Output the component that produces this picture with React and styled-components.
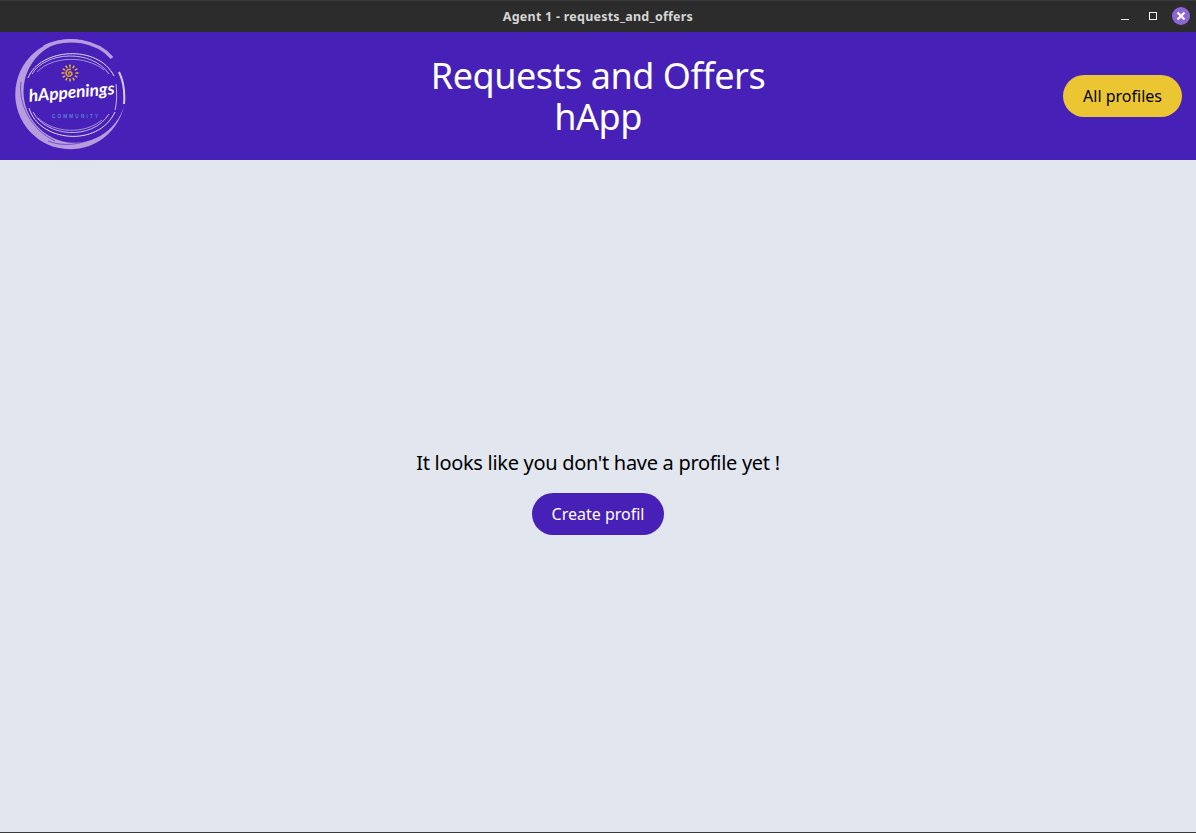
import React from "react";
import styled, { createGlobalStyle } from "styled-components";

const GlobalStyle = createGlobalStyle`
  html, body {
    margin: 0;
    padding: 0;
    height: 100%;
    background: #e2e6ef;
  }
  #root {
    height: 100%;
  }
`;

function WindowButtons() {
  return (
    <WindowControls>
      <svg width="12" height="12" viewBox="0 0 12 12">
        <rect x="2" y="9" width="8" height="1" fill="#e8e8e8" />
      </svg>
      <svg width="12" height="12" viewBox="0 0 12 12">
        <rect x="2.5" y="2.5" width="7" height="7" fill="none" stroke="#f0f0f0" />
      </svg>
      <CloseButton>
        <svg width="10" height="10" viewBox="0 0 10 10">
          <path d="M1.5 1.5L8.5 8.5M8.5 1.5L1.5 8.5" stroke="#fff" strokeWidth="2.2" />
        </svg>
      </CloseButton>
    </WindowControls>
  );
}

function Logo() {
  const rays = [0, 30, 60, 90, 120, 150, 180, 210, 240, 270, 300, 330];
  return (
    <svg width="112" height="114" viewBox="0 0 112 114">
      {/* brush ring */}
      <path d="M70 3A55 55 0 1 0 110 68A51.3 51.3 0 1 1 70 3Z" fill="#b79ce0" />
      <path d="M30 9C54 -3 84 3 98 20" fill="none" stroke="#b79ce0" strokeWidth="3.5" />
      <path d="M105 34C110 44 111 54 110 66" fill="none" stroke="#d9c9f2" strokeWidth="2" />
      <path d="M7 44C4 66 17 92 41 103" fill="none" stroke="#4720b7" strokeWidth="0.6" />
      <path d="M34 103C56 112 88 103 102 80" fill="none" stroke="#4720b7" strokeWidth="0.6" />
      {/* thin inner rings */}
      <g fill="none" stroke="#e4daf5">
        <path d="M14 40C26 10 84 6 100 38" strokeWidth="1" />
        <path d="M18 36C32 13 78 11 95 36" strokeWidth="0.8" />
        <path d="M23 34C38 18 72 17 90 32" strokeWidth="0.6" />
        <path d="M15 70C25 104 84 110 101 74" strokeWidth="1" />
        <path d="M19 74C32 99 78 103 95 76" strokeWidth="0.8" />
        <path d="M24 80C40 95 70 97 88 82" strokeWidth="0.6" />
        <path d="M102 46C103 56 103 64 101 72" strokeWidth="0.8" />
      </g>
      {/* sun */}
      <g stroke="#eec22f" strokeWidth="1.4">
        {rays.map((angle) => (
          <line key={angle} x1="56" y1="26.5" x2="56" y2="29.5" transform={`rotate(${angle} 56 35)`} />
        ))}
      </g>
      <path d="M55 36.5C54 34 56 33 57.5 34.5C59 37 55.5 39.5 53 37.5C50.5 34.5 53.5 30.5 57 31.5" fill="none" stroke="#e8a32a" strokeWidth="1.5" />
      <LogoName x="15" y="60" textLength="86" lengthAdjust="spacingAndGlyphs" transform="rotate(-5 58 59)">
        hAppenings
      </LogoName>
      <LogoTag x="38" y="80" textLength="46">COMMUNITY</LogoTag>
    </svg>
  );
}

export default function App() {
  return (
    <Page>
      <GlobalStyle />
      <TitleBar>
        <WindowTitle>Agent 1 - requests_and_offers</WindowTitle>
        <WindowButtons />
      </TitleBar>
      <Header>
        <LogoSlot>
          <Logo />
        </LogoSlot>
        <Title>
          Requests and Offers
          <br />
          hApp
        </Title>
        <HeaderActions>
          <PillButton $variant="yellow">All profiles</PillButton>
        </HeaderActions>
      </Header>
      <Main>
        <Message>It looks like you don't have a profile yet !</Message>
        <PillButton $variant="purple">Create profil</PillButton>
      </Main>
    </Page>
  );
}

const Page = styled.div`
  display: flex;
  flex-direction: column;
  height: 100vh;
  box-sizing: border-box;
  border-bottom: 1px solid #3a3a3a;
  overflow: hidden;
  font-family: "Noto Sans", "Open Sans", sans-serif;
  color: #000;
`;

const TitleBar = styled.div`
  position: relative;
  display: flex;
  align-items: center;
  justify-content: center;
  flex: 0 0 32px;
  background: #2c2c2c;
  border-top: 1px solid #3a3a3a;
  box-sizing: border-box;
`;

const WindowTitle = styled.span`
  font-size: 12.5px;
  font-weight: 700;
  color: #d6d6d6;
  letter-spacing: 0.24px;
`;

const WindowControls = styled.div`
  position: absolute;
  right: 6px;
  top: 6px;
  display: flex;
  align-items: center;
  gap: 16px;
`;

const CloseButton = styled.span`
  display: flex;
  align-items: center;
  justify-content: center;
  width: 18px;
  height: 18px;
  margin-left: -3px;
  border-radius: 50%;
  background: #8a66d6;
`;

const Header = styled.header`
  display: grid;
  grid-template-columns: 1fr auto 1fr;
  align-items: center;
  flex: 0 0 128px;
  padding: 0 14px;
  box-sizing: border-box;
  background: #4720b7;
`;

const LogoSlot = styled.div`
  display: flex;
  align-items: center;
  margin-bottom: 2px;
`;

const LogoName = styled.text`
  font-family: "Lato", sans-serif;
  font-size: 17px;
  font-style: italic;
  font-weight: 700;
  fill: #fff;
`;

const LogoTag = styled.text`
  font-family: "Liberation Sans", sans-serif;
  font-size: 4.5px;
  fill: #5fb4ea;
`;

const Title = styled.h1`
  margin: 0;
  font-size: 36px;
  font-weight: 400;
  line-height: 41px;
  letter-spacing: -0.47px;
  text-align: center;
  color: #fff;
`;

const HeaderActions = styled.div`
  display: flex;
  justify-content: flex-end;
`;

const PillButton = styled.button`
  height: 42px;
  padding: 0 20px;
  border: 0;
  border-radius: 21px;
  font-family: inherit;
  font-size: 16px;
  background: ${(props) => (props.$variant === "yellow" ? "#ecc632" : "#4720b7")};
  color: ${(props) => (props.$variant === "yellow" ? "#000" : "#fff")};
`;

const Main = styled.main`
  display: flex;
  flex: 1;
  flex-direction: column;
  align-items: center;
  justify-content: center;
  gap: 16px;
  padding-bottom: 8px;
`;

const Message = styled.p`
  margin: 0;
  font-size: 20px;
  line-height: 28px;
  letter-spacing: -0.3px;
`;
